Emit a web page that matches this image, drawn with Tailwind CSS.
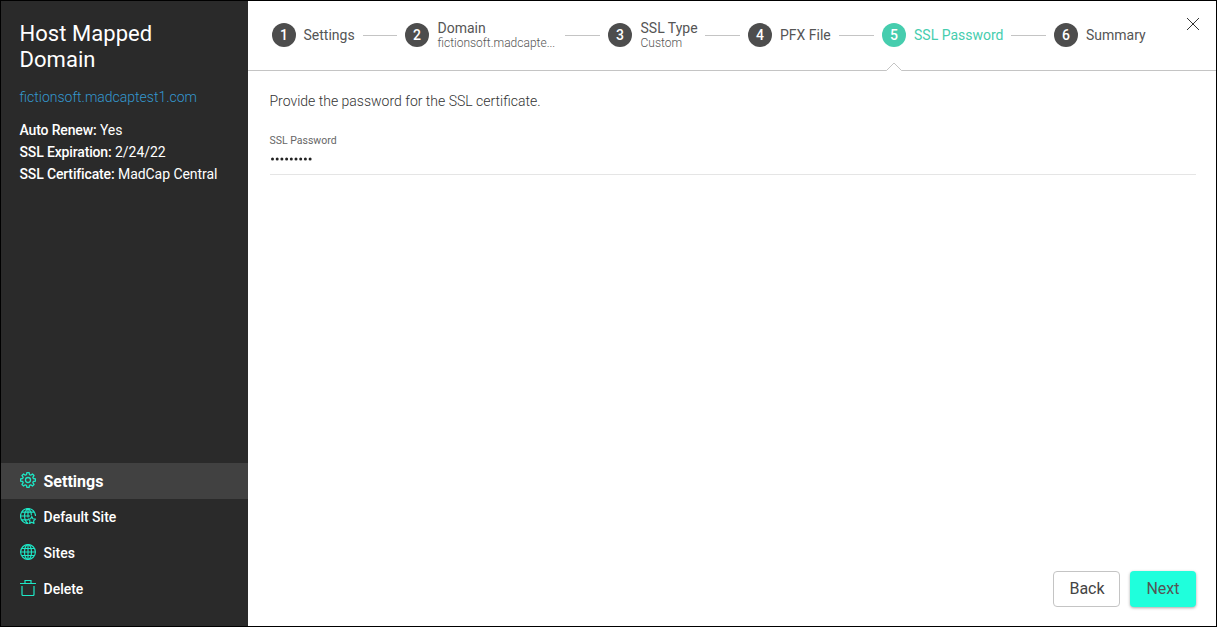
<!DOCTYPE html>
<html lang="en">
<head>
<meta charset="utf-8">
<title>Host Mapped Domain</title>
<script src="https://cdn.jsdelivr.net/npm/@tailwindcss/browser@4"></script>
</head>
<body class="font-['Roboto',sans-serif]">
<div class="flex h-[627px] w-[1217px] overflow-hidden border border-black bg-white">
  <aside class="flex w-[247px] shrink-0 flex-col bg-[#2a2a2a] text-white">
    <div class="px-[18.5px] pt-5">
      <h1 class="text-[22px] leading-[26px] tracking-[0.05px]">Host Mapped<br>Domain</h1>
      <a class="mt-[13px] block text-sm leading-[22px] font-light text-[#3498cf]">fictionsoft.madcaptest1.com</a>
      <div class="mt-[11px] text-sm leading-[22px] whitespace-nowrap">
        <p><span class="font-medium tracking-[-0.15px]">Auto Renew:</span> <span class="tracking-[-0.05px]">Yes</span></p>
        <p><span class="font-medium tracking-[-0.15px]">SSL Expiration:</span> <span class="tracking-[-0.05px]">2/24/22</span></p>
        <p><span class="font-medium tracking-[-0.15px]">SSL Certificate:</span> <span class="tracking-[-0.05px]">MadCap Central</span></p>
      </div>
    </div>
    <nav class="mt-auto mb-[19px] text-sm font-medium">
      <a class="flex h-9 items-center gap-2 bg-[#414141] pl-[18.5px] text-base font-bold">
        <svg class="mb-0.5 h-4 w-[16px]" viewBox="-8 -8 16 16" fill="none" stroke="#1ee6c5" stroke-width="1.3" stroke-linejoin="round"><path d="M-1.5-5.3-1.1-7.4H1.1L1.5-5.3 2.69-4.81 4.45-6.01 6.01-4.45 4.81-2.69 5.3-1.5 7.4-1.1V1.1L5.3 1.5 4.81 2.69 6.01 4.45 4.45 6.01 2.69 4.81 1.5 5.3 1.1 7.4H-1.1L-1.5 5.3-2.69 4.81-4.45 6.01-6.01 4.45-4.81 2.69-5.3 1.5-7.4 1.1V-1.1L-5.3-1.5-4.81-2.69-6.01-4.45-4.45-6.01-2.69-4.81Z"/><circle r="2.5"/></svg>
        <span class="pt-0.5">Settings</span>
      </a>
      <a class="flex h-9 items-center gap-2 pl-[18.5px]">
        <svg class="mb-0.5 size-4" viewBox="0 0 16 16" fill="none" stroke="#1ee6c5" stroke-width="1.15" stroke-linejoin="round"><path d="M8.5 15.500H8A7.500 7.500 0 1 1 15.500 8M8 .5v9M.5 8H10M1.800 4.200H14.200M1.800 11.800H8M8 .5C3.400 4 3.400 12 8 15.500M8 .5c2.300 1.800 3.400 4.500 3.400 7"/><path d="m11.800 8.500 1.100 2.300 2.500.3-1.800 1.800.4 2.500-2.200-1.200-2.200 1.200.4-2.500-1.800-1.800 2.500-.3z"/></svg>
        <span>Default Site</span>
      </a>
      <a class="flex h-9 items-center gap-2 pl-[18.5px]">
        <svg class="mb-0.5 size-4" viewBox="0 0 16 16" fill="none" stroke="#1ee6c5" stroke-width="1.15"><circle cx="8" cy="8" r="7.400"/><path d="M8 .5v15M.5 8h15M1.800 4.500H14.200M1.800 11.500H14.200"/><ellipse cx="8" cy="8" rx="3.500" ry="7.400"/></svg>
        <span>Sites</span>
      </a>
      <a class="flex h-9 items-center gap-2 pl-[18.5px]">
        <svg class="mb-0.5 size-4" viewBox="0 0 16 16" fill="none" stroke="#1ee6c5" stroke-width="1.2"><path d="M0 3.500h16M5 3.500v-3h6v3M2 6v8.500q0 1 1 1h10q1 0 1-1V6"/></svg>
        <span>Delete</span>
      </a>
    </nav>
  </aside>

  <main class="flex min-w-0 flex-1 flex-col">
    <header class="relative flex h-[70px] shrink-0 border-b border-[#c4c4c4] pl-6 text-sm text-[#555]">
      <ol class="flex h-[68px] items-center whitespace-nowrap">
        <li class="flex items-center gap-2"><span class="flex size-6 items-center justify-center rounded-full bg-[#4d4d4d] font-medium text-white">1</span><span class="-ml-[0.5px] w-[51px]">Settings</span></li>
        <li class="mr-2 ml-[8.500px] mt-px h-px w-[34px] bg-[#c4c4c4]"></li>
        <li class="flex items-center gap-2"><span class="flex size-6 items-center justify-center rounded-full bg-[#4d4d4d] font-medium text-white">2</span><span class="w-[120px] pl-[0.5px] pt-px leading-4">Domain<span class="block text-xs leading-[15px] font-light">fictionsoft.madcapte...</span></span></li>
        <li class="mx-2 mt-px h-px w-[35px] bg-[#c4c4c4]"></li>
        <li class="flex items-center gap-2"><span class="flex size-6 items-center justify-center rounded-full bg-[#4d4d4d] font-medium text-white">3</span><span class="w-[57px] pl-[0.5px] pt-px leading-4">SSL Type<span class="block text-xs leading-[15px] font-light">Custom</span></span></li>
        <li class="mx-2 mt-px h-px w-[35px] bg-[#c4c4c4]"></li>
        <li class="flex items-center gap-2"><span class="flex size-6 items-center justify-center rounded-full bg-[#4d4d4d] font-medium text-white">4</span><span class="w-[51px]">PFX File</span></li>
        <li class="mx-2 mt-px h-px w-[35px] bg-[#c4c4c4]"></li>
        <li class="relative flex items-center gap-2 text-[#46cdae]"><span class="flex size-6 items-center justify-center rounded-full bg-[#46cdae] font-medium text-white">5</span><span class="w-[89px]">SSL Password</span>
          <svg class="absolute top-[39px] left-[4px] h-[9px] w-4" viewBox="0 0 16 9"><path d="M.5 9V8.500L8 1l7.500 7.500V9z" fill="#fff"/><path d="M.5 8.500 8 1l7.500 7.500" fill="none" stroke="#c4c4c4"/></svg>
        </li>
        <li class="mx-2 mt-px h-px w-[35px] bg-[#c4c4c4]"></li>
        <li class="flex items-center gap-2"><span class="flex size-6 items-center justify-center rounded-full bg-[#4d4d4d] font-medium text-white">6</span><span>Summary</span></li>
      </ol>
      <button class="mt-[16px] mr-[16px] ml-auto size-[14px]" aria-label="Close"><svg class="size-[14px]" viewBox="0 0 14 14" stroke="#333" stroke-width="1"><path d="m1 1 12 12M13 1 1 13"/></svg></button>
    </header>
    <section class="flex-1 pr-[20px] pl-[21.5px] pt-[21px] text-[#333]">
      <p class="text-sm leading-[18px] font-light">Provide the password for the SSL certificate.</p>
      <div class="mt-[22px] h-[43px] border-b border-[#e5e5e5] pt-px">
        <label class="block text-[10.500px] leading-[16px] text-[#666]">SSL Password</label>
        <svg class="mt-[8px] block h-1 w-[44px]" viewBox="0 0 44 4" fill="#222"><circle cx="2.500" cy="2" r="1.500"/><circle cx="7.200" cy="2" r="1.500"/><circle cx="11.900" cy="2" r="1.500"/><circle cx="16.600" cy="2" r="1.500"/><circle cx="21.300" cy="2" r="1.500"/><circle cx="26" cy="2" r="1.500"/><circle cx="30.700" cy="2" r="1.500"/><circle cx="35.400" cy="2" r="1.500"/><circle cx="40.100" cy="2" r="1.500"/></svg>
      </div>
    </section>
    <footer class="mr-5 mb-[19px] flex justify-end gap-[10px] text-base">
      <button class="h-9 w-[67px] rounded border border-[#c4c4c4] pl-px text-[#444]">Back</button>
      <button class="h-9 w-[66px] rounded bg-[#1fffdc] text-[#555] shadow-[0_1px_3px_rgba(0,0,0,0.35)]">Next</button>
    </footer>
  </main>
</div>
</body>
</html>
